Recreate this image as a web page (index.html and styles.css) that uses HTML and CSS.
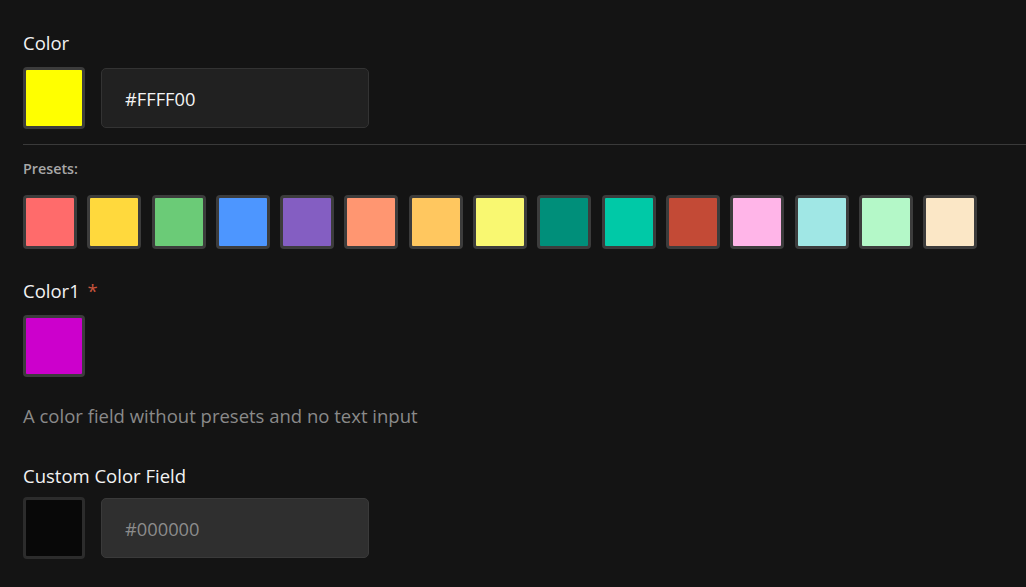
FILE: index.html
```html
<!DOCTYPE html>
<html lang="en">
<head>
    <meta charset="UTF-8">
    <meta name="viewport" content="width=device-width, initial-scale=1.0">
    <title>Color Fields</title>
    <link rel="stylesheet" href="styles.css">
</head>
<body>
    <div class="form">
        <div class="field">
            <label class="field-label">Color</label>
            <div class="field-row">
                <div class="swatch" style="background-color: #ffff00;"></div>
                <input class="hex-input" type="text" value="#FFFF00">
            </div>
        </div>

        <hr class="divider">

        <div class="presets">
            <div class="presets-label">Presets:</div>
            <div class="presets-row">
                <div class="preset" style="background-color: #ff6b6b;"></div>
                <div class="preset" style="background-color: #ffd93d;"></div>
                <div class="preset" style="background-color: #6bcb77;"></div>
                <div class="preset" style="background-color: #4d96ff;"></div>
                <div class="preset" style="background-color: #845ec2;"></div>
                <div class="preset" style="background-color: #ff9671;"></div>
                <div class="preset" style="background-color: #ffc75f;"></div>
                <div class="preset" style="background-color: #f9f871;"></div>
                <div class="preset" style="background-color: #008f7a;"></div>
                <div class="preset" style="background-color: #00c9a7;"></div>
                <div class="preset" style="background-color: #c34a36;"></div>
                <div class="preset" style="background-color: #ffb5e8;"></div>
                <div class="preset" style="background-color: #a0e7e5;"></div>
                <div class="preset" style="background-color: #b4f8c8;"></div>
                <div class="preset" style="background-color: #fbe7c6;"></div>
            </div>
        </div>

        <div class="field field-color1">
            <label class="field-label">Color1 <span class="required">*</span></label>
            <div class="field-row">
                <div class="swatch" style="background-color: #cc00cc;"></div>
            </div>
            <p class="description">A color field without presets and no text input</p>
        </div>

        <div class="field field-custom">
            <label class="field-label">Custom Color Field</label>
            <div class="field-row">
                <div class="swatch swatch-empty" style="background-color: #080808;"></div>
                <input class="hex-input hex-input-disabled" type="text" value="#000000" disabled>
            </div>
        </div>
    </div>
</body>
</html>
```

FILE: styles.css
```css
body {
    margin: 0;
    background-color: #141414;
    font-family: "Open Sans", "Noto Sans", sans-serif;
    color: #ececec;
}

.form {
    padding: 31px 0 0 23px;
}

.field-label {
    display: block;
    font-size: 18.5px;
    line-height: 24px;
    color: #f2f2f2;
    margin-bottom: 12px;
}

.required {
    color: #c8553d;
    margin-left: 3px;
}

.field-row {
    display: flex;
    align-items: center;
}

.swatch {
    width: 56px;
    height: 56px;
    border: 3px solid #3c3c3c;
    border-radius: 4px;
}

.swatch-empty {
    border-color: #2c2c2c;
}

.hex-input {
    box-sizing: border-box;
    width: 268px;
    height: 60px;
    margin-left: 16px;
    padding: 0 23px;
    background-color: #212121;
    border: 1px solid #333333;
    border-radius: 5px;
    font-family: inherit;
    font-size: 18.3px;
    color: #f4f4f4;
    outline: none;
}

.hex-input-disabled {
    background-color: #2f2f2f;
    border-color: #3a3a3a;
    color: #8c8c8c;
}

.divider {
    margin: 15px 0 0 0;
    border: none;
    border-top: 1px solid #3a3a3a;
}

.presets-label {
    margin-top: 15px;
    font-size: 14.3px;
    line-height: 18px;
    font-weight: 600;
    color: #a8a8a8;
}

.presets-row {
    display: flex;
    gap: 10.3px;
    margin-top: 17px;
}

.preset {
    box-sizing: border-box;
    width: 54px;
    height: 54px;
    border: 3px solid #3c3c3c;
    border-radius: 4px;
}

.field-color1 {
    margin-top: 30px;
}

.description {
    margin: 27px 0 0 0;
    font-size: 18.5px;
    line-height: 24px;
    color: #8a8a8a;
}

.field-custom {
    margin-top: 36px;
}

.field-custom .field-label {
    margin-bottom: 9px;
}
```
